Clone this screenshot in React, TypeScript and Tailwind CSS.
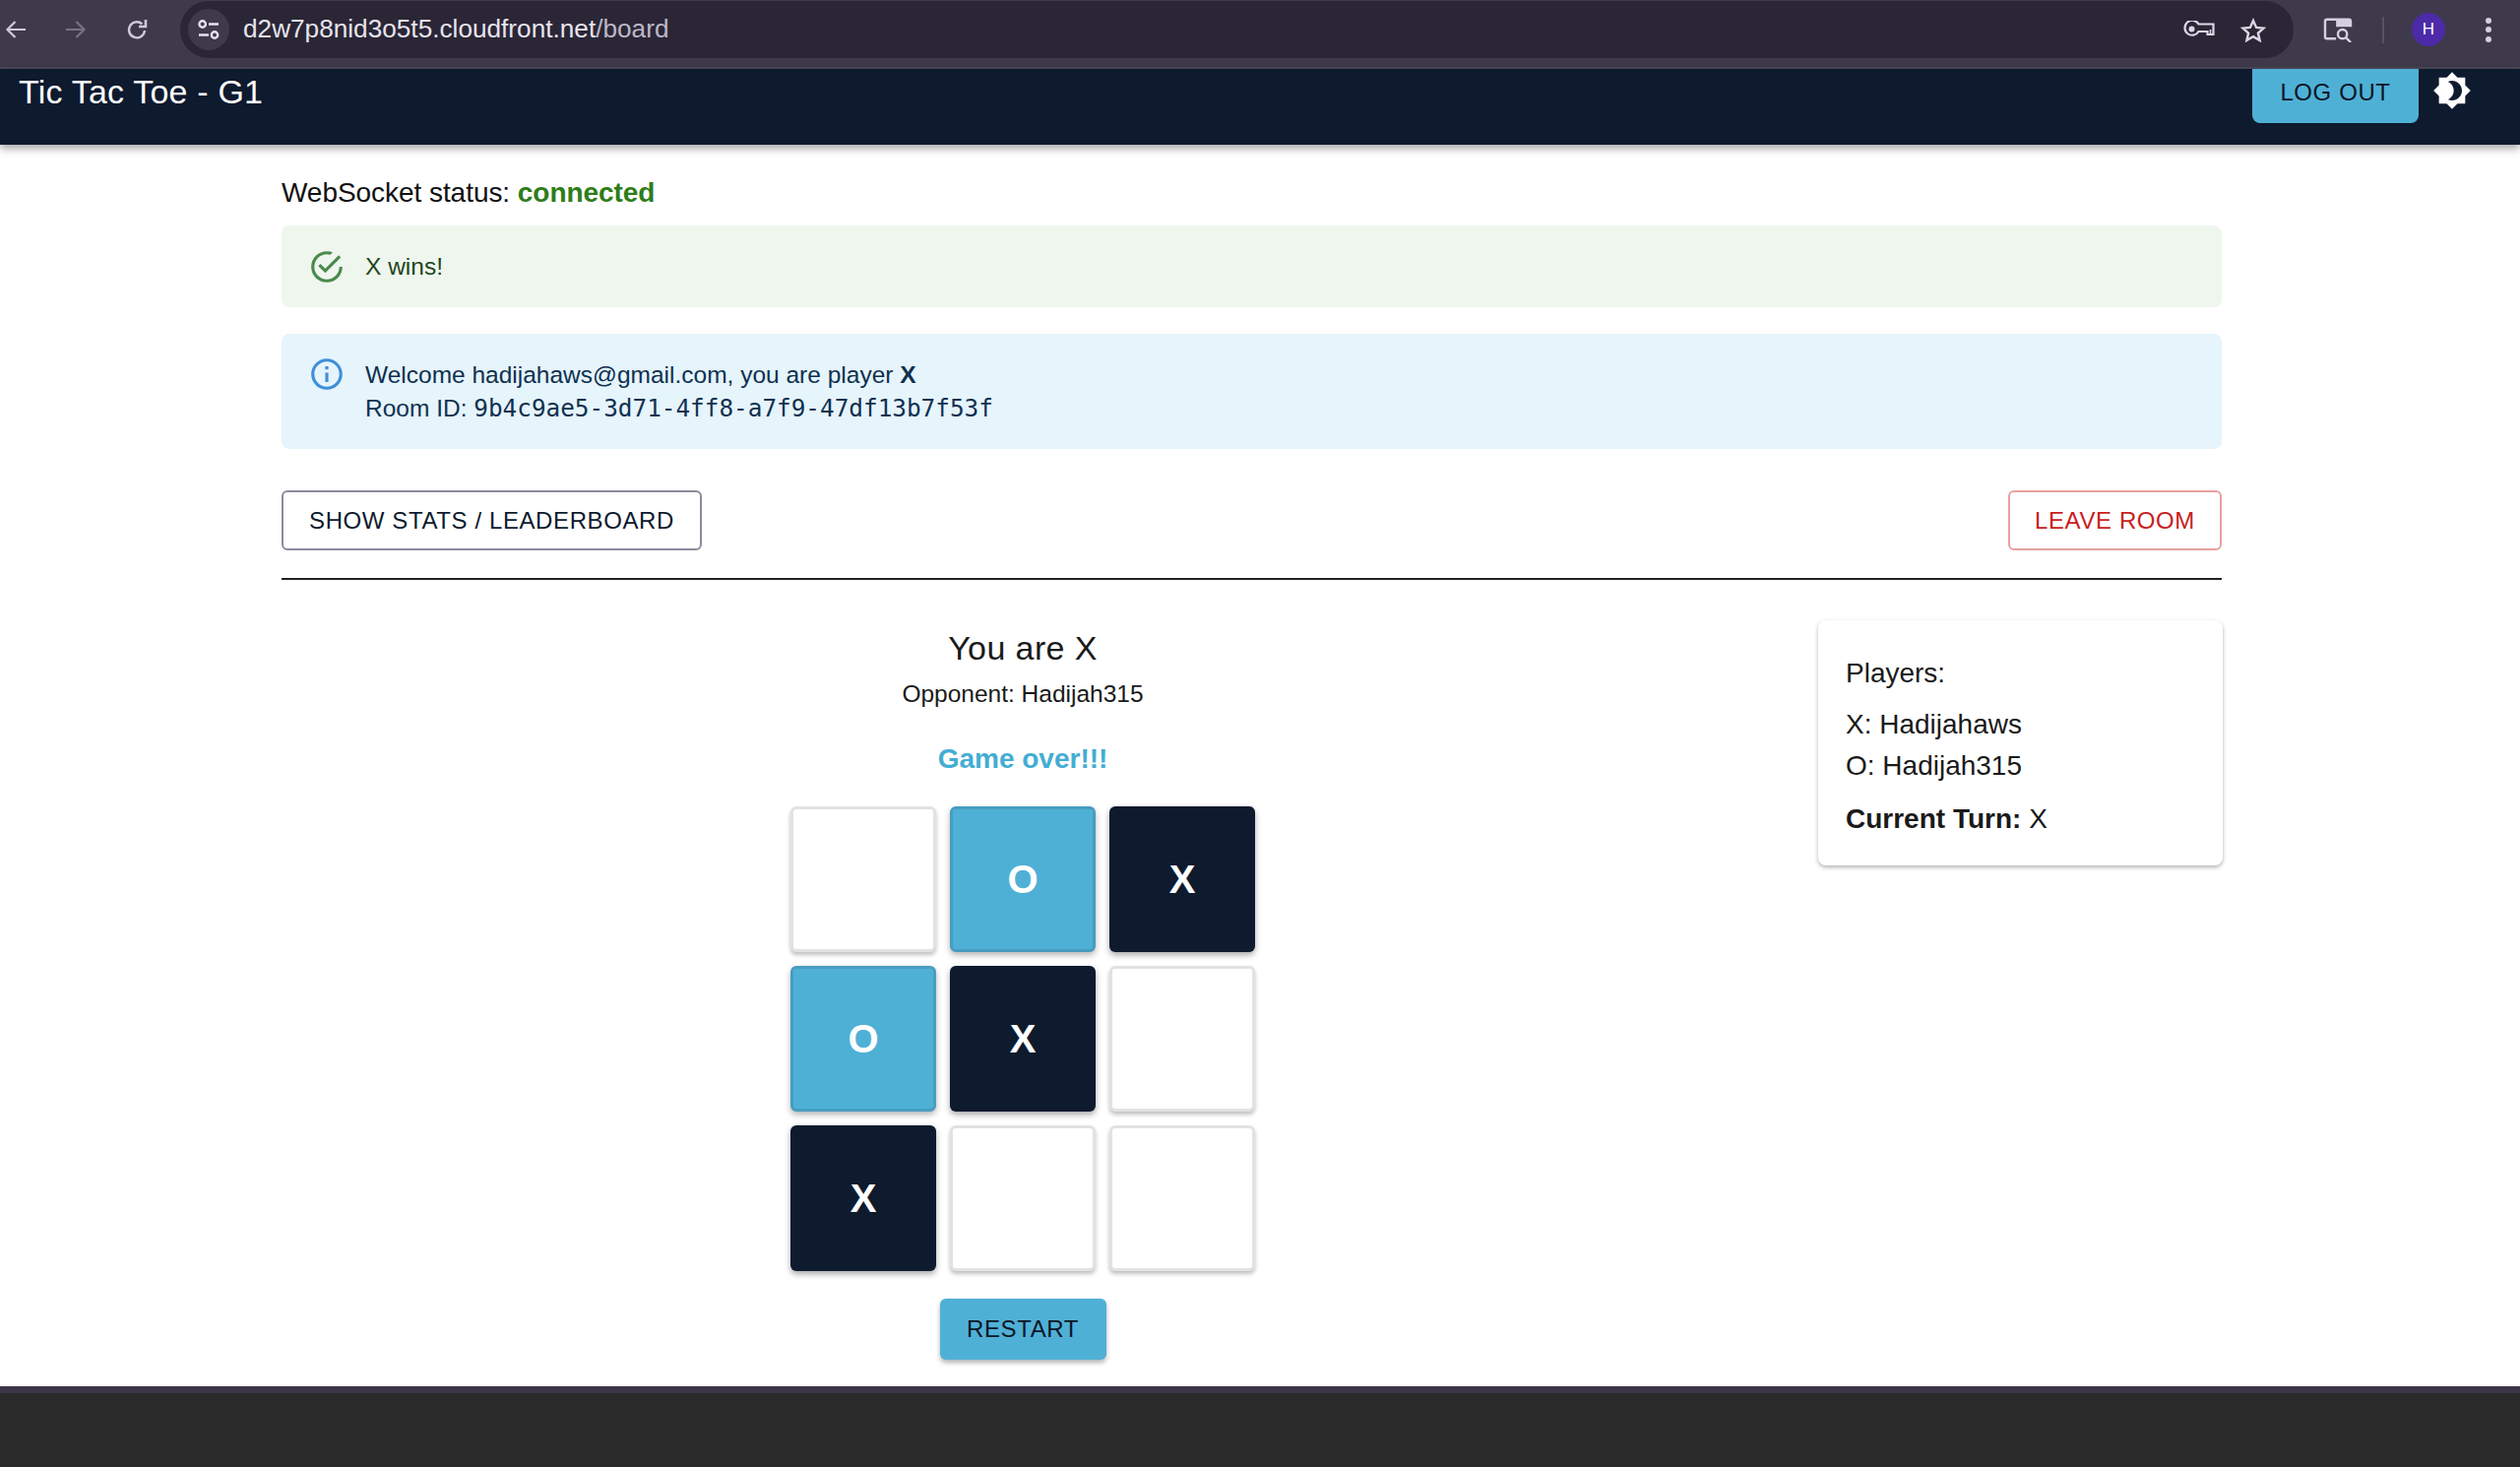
const sans = "[font-family:'Liberation_Sans',Arial,sans-serif]";

function Chrome() {
  return (
    <div className="flex h-[70px] shrink-0 items-start border-b-[2px] border-[#4a4656] bg-[#3e3a4b] pt-px">
      <div className="flex h-[58px] w-[183px] shrink-0 items-center pl-[5px] text-[#cfc9da]">
        <svg width="22" height="20" viewBox="0 0 22 20" fill="none" stroke="currentColor" strokeWidth="2.2">
          <path d="M21 10H2.5M10.5 2l-8 8 8 8" />
        </svg>
        <svg width="22" height="20" viewBox="0 0 22 20" fill="none" stroke="#777283" strokeWidth="2.2" className="ml-[39px]">
          <path d="M1 10h18.5M11.5 2l8 8-8 8" />
        </svg>
        <svg width="22" height="22" viewBox="0 0 22 22" fill="none" stroke="currentColor" strokeWidth="2.4" className="ml-[40px]">
          <path d="M19 12a8 8 0 1 1-2.6-6.6" />
          <path d="M20 1v7h-7" strokeWidth="2.6" />
        </svg>
      </div>
      <div className="flex h-[58px] w-[2147px] shrink-0 items-center rounded-full bg-[#2a2636] pl-[8px] pr-[28px]">
        <div className="flex h-[42px] w-[42px] items-center justify-center rounded-full bg-[#3e3a4b]">
          <svg width="24" height="20" viewBox="0 0 24 20" fill="none" stroke="#e6e1ee" strokeWidth="2.4">
            <circle cx="5.7" cy="4.5" r="3.2" />
            <path d="M12 4.5h10M2 15.5h10" />
            <circle cx="18" cy="15.5" r="3.2" />
          </svg>
        </div>
        <div className={`ml-[14px] text-[26.2px] text-[#e8e4ee] ${sans}`}>
          d2w7p8nid3o5t5.cloudfront.net<span className="text-[#bdb8c8]">/board</span>
        </div>
        <div className="ml-auto flex items-center gap-[26px] text-[#dcd7e4]">
          <svg width="32" height="18" viewBox="0 0 32 18" fill="none" stroke="currentColor" strokeWidth="2.2">
            <path d="M15.5 3.5H30.5v10.5h-6v-3h-9a7.5 7.5 0 1 1 0-7.5z" />
            <circle cx="8.5" cy="8.5" r="3" fill="currentColor" stroke="none" />
            <path d="M27.5 9v5" strokeWidth="1.6" />
          </svg>
          <svg width="26" height="25" viewBox="0 0 26 25" fill="none" stroke="currentColor" strokeWidth="2.4">
            <path d="M13 3l3.1 6.9 7.4.7-5.6 5 1.7 7.4-6.6-3.9-6.6 3.9 1.7-7.4-5.6-5 7.4-.7z" />
          </svg>
        </div>
      </div>
      <div className="flex h-[58px] items-center pl-[30px] text-[#d5cfe0]">
        <svg width="30" height="26" viewBox="0 0 32 28" fill="none" stroke="currentColor" strokeWidth="2.6">
          <path d="M14 24H4a2 2 0 0 1-2-2V5a2 2 0 0 1 2-2h24a2 2 0 0 1 2 2v6" />
          <path d="M14 3h14a2 2 0 0 1 2 2v6H14z" fill="currentColor" stroke="none" />
          <circle cx="21" cy="19" r="5" />
          <path d="M25 23l5 5" />
        </svg>
        <div className="ml-[30px] h-[27px] w-[2px] bg-[#57525f]" />
        <div className="ml-[28px] flex h-[34px] w-[34px] items-center justify-center rounded-full bg-[#4c2aa8] text-[17px] text-white">H</div>
        <div className="ml-[41px] flex flex-col gap-[3.5px]">
          <span className="h-[6px] w-[6px] rounded-full bg-[#d5cfe0]" />
          <span className="h-[6px] w-[6px] rounded-full bg-[#d5cfe0]" />
          <span className="h-[6px] w-[6px] rounded-full bg-[#d5cfe0]" />
        </div>
      </div>
    </div>
  );
}

function Header() {
  return (
    <div className="relative z-10 flex h-[77px] shrink-0 items-start overflow-hidden bg-[#0e1a2e] pl-[19px] pr-[49px] shadow-[0_4px_8px_rgba(0,0,0,0.35)]">
      <div className="mt-[4px] text-[34px] leading-[38px] tracking-[0.2px] text-white">Tic Tac Toe - G1</div>
      <div className="ml-auto flex items-start gap-[14px]">
        <button className="-mt-[8px] h-[63px] w-[169px] rounded-b-[8px] bg-[#4fb0d6] text-[24px] tracking-[0.6px] text-[#0c1626]">
          LOG OUT
        </button>
        <svg width="40" height="40" viewBox="0 0 24 24" fill="#fff" className="mt-[2px]">
          <path fillRule="evenodd" d="M20 8.69V4h-4.69L12 .69 8.69 4H4v4.69L.69 12 4 15.31V20h4.69L12 23.31 15.31 20H20v-4.69L23.31 12 20 8.69zM12 18c-.89 0-1.74-.2-2.5-.55C11.56 16.5 13 14.42 13 12s-1.44-4.5-3.5-5.45C10.26 6.2 11.11 6 12 6c3.31 0 6 2.69 6 6s-2.69 6-6 6z" />
        </svg>
      </div>
    </div>
  );
}

function Cell({ v }: { v: "" | "X" | "O" }) {
  if (v === "X")
    return (
      <div className="flex h-[148px] w-[148px] items-center justify-center rounded-[6px] bg-[#0e1a2e] text-[40px] font-bold text-white shadow-[0_3px_6px_rgba(0,0,0,0.35)]">X</div>
    );
  if (v === "O")
    return (
      <div className="flex h-[148px] w-[148px] items-center justify-center rounded-[6px] border-[3px] border-[#479dc0] bg-[#4fb0d6] text-[40px] font-bold text-white shadow-[0_3px_6px_rgba(0,0,0,0.3)]">O</div>
    );
  return <div className="h-[148px] w-[148px] rounded-[6px] border-[3px] border-[#e2e2e2] bg-white shadow-[0_3px_4px_rgba(0,0,0,0.25)]" />;
}

export default function App() {
  const cells: ("" | "X" | "O")[] = ["", "O", "X", "O", "X", "", "X", "", ""];
  return (
    <div className={`flex h-[1490px] w-[2560px] flex-col overflow-hidden bg-white ${sans}`}>
      <Chrome />
      <Header />
      <main className="flex h-[1261px] shrink-0 flex-col pl-[286px] pr-[303px]">
        <div className="mt-[32px] text-[28px] leading-[34px] tracking-[-0.05px] text-[#111]">
          WebSocket status: <span className="font-bold text-[#2e7d1a]">connected</span>
        </div>
        <div className="mt-[16px] flex h-[83px] items-center rounded-[8px] bg-[#eff6ee] pl-[27px] text-[24.5px] text-[#1e4620]">
          <svg width="38" height="38" viewBox="0 0 24 24" fill="#4a8a4d">
            <path d="M20 12a8 8 0 0 1-8 8 8 8 0 0 1-8-8 8 8 0 0 1 8-8c.76 0 1.5.11 2.2.31l1.57-1.57A9.82 9.82 0 0 0 12 2 10 10 0 0 0 2 12a10 10 0 0 0 10 10 10 10 0 0 0 10-10M7.91 10.08 6.5 11.5 11 16 21 6l-1.41-1.42L11 13.17z" />
          </svg>
          <span className="ml-[20px] mt-[2px]">X wins!</span>
        </div>
        <div className="mt-[27px] flex h-[117px] items-start rounded-[8px] bg-[#e6f4fc] pl-[27px] pt-[25px] text-[24.5px] leading-[34px] text-[#0e3150]">
          <svg width="38" height="38" viewBox="0 0 24 24" fill="#3f8fd8" className="mt-[-3px]">
            <path d="M11 7h2v2h-2zm0 4h2v6h-2zm1-9C6.48 2 2 6.48 2 12s4.48 10 10 10 10-4.48 10-10S17.52 2 12 2m0 18c-4.41 0-8-3.59-8-8s3.59-8 8-8 8 3.59 8 8-3.59 8-8 8" />
          </svg>
          <div className="ml-[20px]">
            <div>Welcome hadijahaws@gmail.com, you are player <b>X</b></div>
            <div>Room ID: <span className="[font-family:'DejaVu_Sans_Mono',monospace] text-[24.35px]">9b4c9ae5-3d71-4ff8-a7f9-47df13b7f53f</span></div>
          </div>
        </div>
        <div className="mt-[42px] flex items-center justify-between">
          <button className="h-[61px] w-[427px] rounded-[6px] border-2 border-[#8b8b9c] bg-white text-[24px] tracking-[0.6px] text-[#0e1a2e]">SHOW STATS / LEADERBOARD</button>
          <button className="h-[61px] w-[217px] rounded-[6px] border-2 border-[#e8a0a0] bg-white text-[24px] tracking-[0.6px] text-[#c81e1e]">LEAVE ROOM</button>
        </div>
        <div className="mt-[28px] h-[2px] bg-[#222]" />
        <div className="flex">
          <div className="flex w-[1506px] shrink-0 flex-col items-center">
            <div className="mt-[47px] text-[34px] leading-[44px] tracking-[0.4px] text-[#1a1a1a]">You are X</div>
            <div className="mt-[9px] text-[24.5px] leading-[32px] text-[#1a1a1a]">Opponent: Hadijah315</div>
            <div className="mt-[33px] text-[28px] leading-[34px] font-bold text-[#43add3]">Game over!!!</div>
            <div className="mt-[31px] grid grid-cols-[148px_148px_148px] gap-[14px]">
              {cells.map((c, i) => (
                <Cell key={i} v={c} />
              ))}
            </div>
            <button className="mt-[28px] h-[62px] w-[169px] rounded-[6px] bg-[#4fb0d6] text-[24px] tracking-[0.6px] text-[#0c1626] shadow-[0_3px_5px_rgba(0,0,0,0.3)]">RESTART</button>
          </div>
          <div className="ml-[55px] mt-[41px] h-[249px] w-[411px] shrink-0 rounded-[8px] bg-white pl-[28px] pt-[37px] text-[28px] leading-[42px] text-[#1a1a1a] shadow-[0_2px_4px_rgba(0,0,0,0.3)]">
            <div className="leading-[34px]">Players:</div>
            <div className="mt-[14px]">X: Hadijahaws</div>
            <div>O: Hadijah315</div>
            <div className="mt-[16px] leading-[34px]"><b>Current Turn:</b> X</div>
          </div>
        </div>
      </main>
      <div className="h-[7px] shrink-0 bg-[#3b3648]" />
      <div className="flex-1 bg-[#2a2a2a]" />
    </div>
  );
}
